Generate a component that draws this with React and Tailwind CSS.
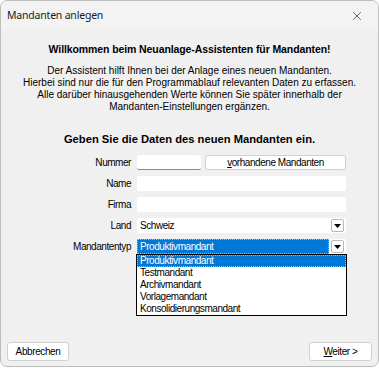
import { X } from 'lucide-react'

const FONT = { fontFamily: '"Liberation Sans", Arial, sans-serif' }

// ─── small combobox arrow button ──────────────────────────────
function DropButton() {
  return (
    <div className="absolute right-[2px] top-[1px] w-[13px] h-[13px] rounded-[2px] border border-[#b9b9b9] bg-white flex items-center justify-center">
      <svg width="7" height="4" viewBox="0 0 7 4"><path d="M0 0h7L3.5 4z" fill="#000" /></svg>
    </div>
  )
}

function Row({ label, children }) {
  return (
    <div className="flex items-center h-[21px]">
      <div className="w-[131px] text-right pr-[1px] text-[10px] tracking-[-0.45px] text-black">{label}</div>
      <div className="ml-[5px] flex items-center gap-[4px]">{children}</div>
    </div>
  )
}

const ITEMS = ['Produktivmandant', 'Testmandant', 'Archivmandant', 'Vorlagemandant', 'Konsolidierungsmandant']

export default function App() {
  return (
    <div className="w-[379px] h-[368px] bg-white" style={FONT}>
      <div className="w-[379px] h-[367px] rounded-[7px] border border-[#bdbdbd] bg-[#f0f0f0] overflow-hidden flex flex-col">
        {/* Title bar */}
        <div className="h-[29px] bg-[#f3f3f3] flex items-center justify-between pl-[6px] pr-[14px]">
          <span className="text-[10.5px] tracking-[-0.2px] text-[#1a1a1a]" style={{ fontFamily: '"Noto Sans", sans-serif' }}>Mandanten anlegen</span>
          <X size={14} strokeWidth={1.2} className="text-[#222]" />
        </div>

        <div className="flex-1 flex flex-col">
          <p className="mt-[13px] text-center font-bold text-[10.5px] tracking-[-0.1px] text-black leading-[13px]">
            Willkommen beim Neuanlage-Assistenten für Mandanten!
          </p>
          <p className="mt-[9px] text-center text-[10px] leading-[12px] text-black">
            Der Assistent hilft Ihnen bei der Anlage eines neuen Mandanten.<br />
            Hierbei sind nur die für den Programmablauf relevanten Daten zu erfassen.<br />
            Alle darüber hinausgehenden Werte können Sie später innerhalb der<br />
            Mandanten-Einstellungen ergänzen.
          </p>
          <p className="mt-[19px] text-center font-bold text-[11.2px] leading-[14px] text-black">
            Geben Sie die Daten des neuen Mandanten ein.
          </p>

          <div className="mt-[6px] flex flex-col text-[10px] tracking-[-0.45px]">
            <Row label="Nummer">
              <div className="w-[64px] h-[15px] bg-white rounded-[2px] border-b border-[#8a8a8a]" />
              <div className="w-[141px] h-[15px] bg-white rounded-[3px] border border-[#d0d0d0] flex items-center justify-center text-black leading-none">
                <span><span className="underline">v</span>orhandene Mandanten</span>
              </div>
            </Row>
            <Row label="Name">
              <div className="w-[209px] h-[15px] bg-white rounded-[2px]" />
            </Row>
            <Row label="Firma">
              <div className="w-[209px] h-[15px] bg-white rounded-[2px]" />
            </Row>
            <Row label="Land">
              <div className="relative w-[209px] h-[15px] bg-white rounded-[2px] text-black leading-[15px] pl-[3px]">
                Schweiz
                <DropButton />
              </div>
            </Row>
            <Row label="Mandantentyp">
              <div className="relative w-[209px] h-[15px] bg-white rounded-[2px]">
                <div className="absolute left-0 top-0 w-[192px] h-[15px] bg-[#0078d7] outline-1 outline-dotted outline-[#f7a35c] -outline-offset-1 text-white leading-[15px] pl-[3px]">
                  Produktivmandant
                </div>
                <DropButton />
                {/* open list */}
                <div className="absolute left-[-1px] top-[15px] w-[211px] border border-black bg-white z-10">
                  {ITEMS.map((it, i) => (
                    <div
                      key={it}
                      className={`h-[12px] leading-[12px] pl-[3px] ${i === 0 ? 'bg-[#0078d7] text-white outline-1 outline-dotted outline-[#f7a35c] -outline-offset-1' : 'text-black'}`}
                    >
                      {it}
                    </div>
                  ))}
                </div>
              </div>
            </Row>
          </div>

          <div className="mt-auto mb-[5px] flex justify-between px-[6px] text-[10px] tracking-[-0.4px]">
            <button className="w-[62px] h-[19px] bg-white rounded-[3px] border border-[#d0d0d0] text-black leading-none">
              Abbrechen
            </button>
            <button className="w-[63px] h-[19px] bg-white rounded-[3px] border border-[#d0d0d0] text-black leading-none">
              <span className="underline">W</span>eiter &gt;
            </button>
          </div>
        </div>
      </div>
    </div>
  )
}
